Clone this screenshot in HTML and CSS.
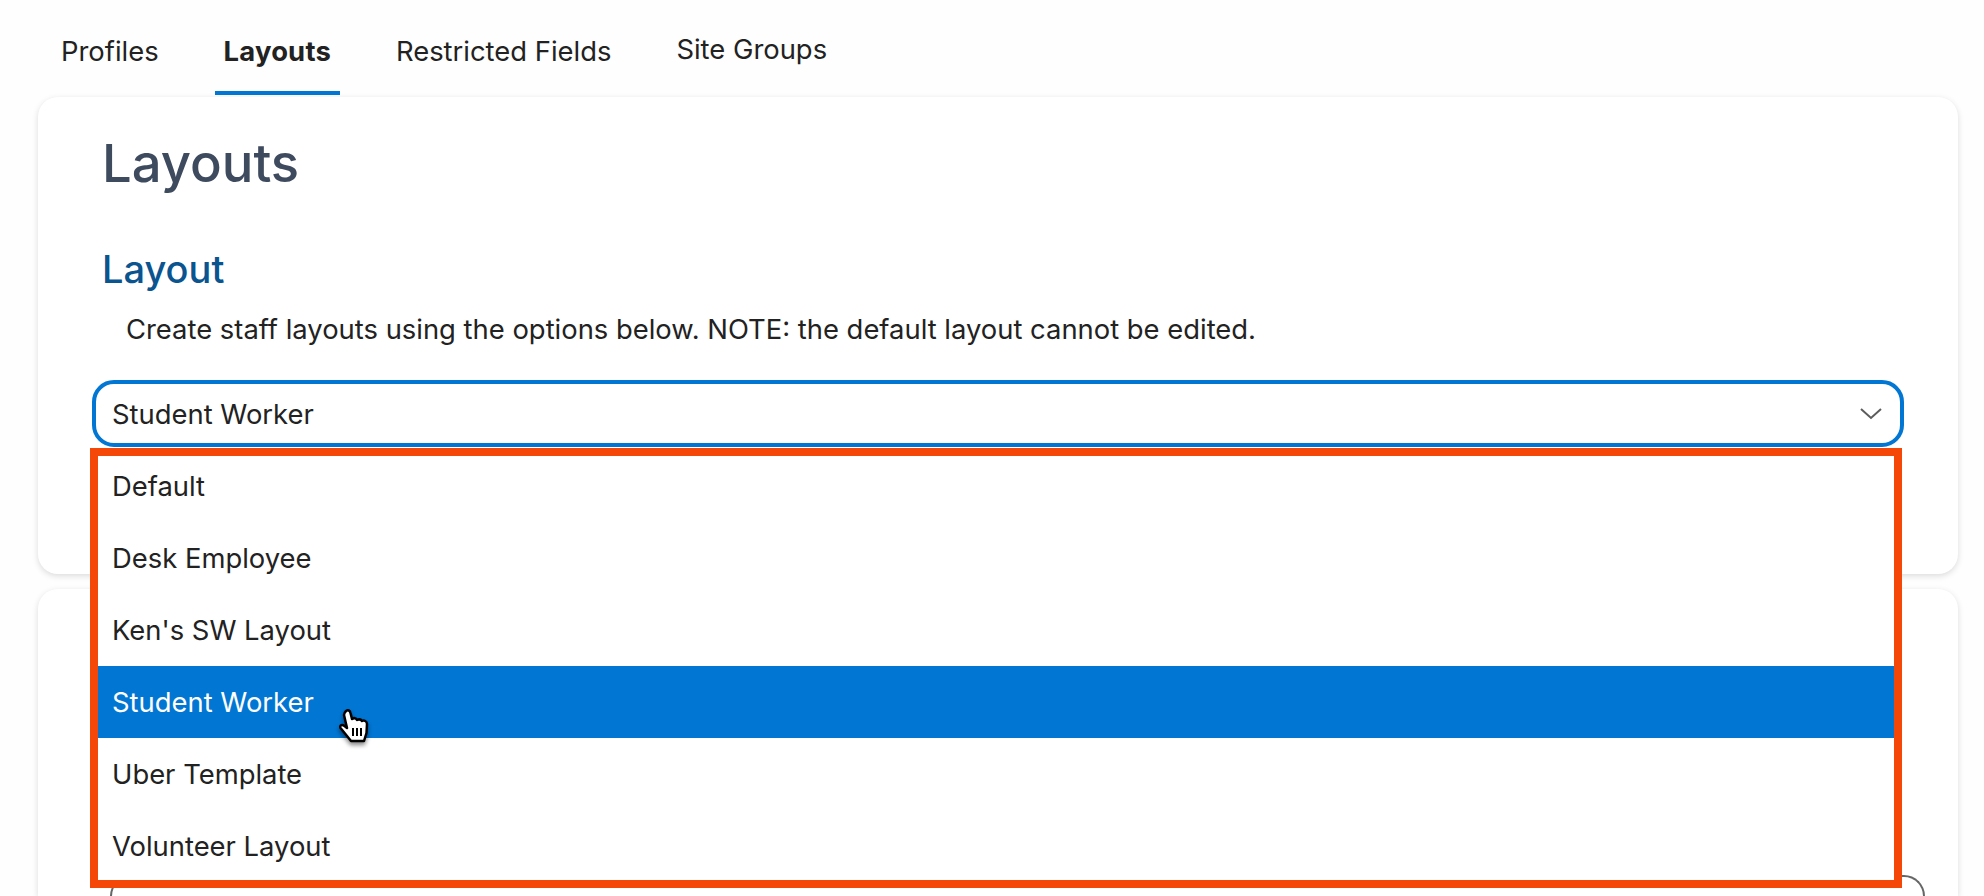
FILE: index.html
```html
<!DOCTYPE html>
<html lang="en">
<head>
    <meta charset="UTF-8">
    <title>Layouts</title>
    <link rel="stylesheet" href="styles.css">
</head>
<body>

<nav class="tabs">
    <a class="tab">Profiles</a>
    <a class="tab tab-active">Layouts</a>
    <a class="tab">Restricted Fields</a>
    <a class="tab tab-raised">Site Groups</a>
</nav>

<section class="card card-layouts">
    <h1>Layouts</h1>
    <h2>Layout</h2>
    <p class="hint">Create staff layouts using the options below. NOTE: the default layout cannot be edited.</p>

    <div class="select-wrap">
        <div class="select">
            <span>Student Worker</span>
            <svg class="chevron" width="24" height="13" viewBox="0 0 24 13">
                <path d="M2 2 L12 11 L22 2" fill="none" stroke="#5c5c5c" stroke-width="2"/>
            </svg>
        </div>

        <ul class="options">
            <li>Default</li>
            <li>Desk Employee</li>
            <li>Ken's SW Layout</li>
            <li class="selected">Student Worker</li>
            <li>Uber Template</li>
            <li>Volunteer Layout</li>
        </ul>

        <!-- hand pointer over the selected row -->
        <svg class="pointer" width="32" height="40" viewBox="0 0 32 40">
            <path class="pointer-hand" d="M7 2 C9 0.500 11 1.500 11.500 4 L13 10 C15 8.500 17 9 18 11 C20 10 22 10.500 23 12 C25 11 28 12 28 15 L27.500 24 L25 32 L12 32 L8 27 L1.500 19 C0.500 16 3 15 5.500 17 L8 19 L5 6 C5 4 6 3 7 2 Z"/>
            <path class="pointer-lines" d="M14 19 V27 M18 19 V27 M22 19 V27"/>
        </svg>
    </div>
</section>

<section class="card card-fields">
    <div class="field"></div>
</section>

</body>
</html>
```

FILE: styles.css
```css
body {
    margin: 0;
    background-color: #fefefe;
    color: #222;
    font-family: 'Inter', 'Liberation Sans', sans-serif;
    font-size: 27.4px;
}

.tabs {
    display: flex;
    gap: 47px;
    height: 95px;
    padding-left: 52px;
    box-sizing: border-box;
}

.tab {
    padding: 32px 9px 0;
    line-height: 38px;
    border-bottom: 4px solid transparent;
}

.tab-active {
    font-weight: 700;
    letter-spacing: 0.2px;
    border-bottom-color: #0176d3;
}

.tab-raised {
    padding-top: 30px;
}

.card {
    margin: 2px 26px 0 38px;
    background-color: #fff;
    border-radius: 20px;
    box-shadow: 0 2px 6px rgba(0, 0, 0, 0.14);
}

.card-layouts {
    height: 477px;
    box-sizing: border-box;
    padding: 34px 54px 0;
}

/* runs off the bottom of the window, so only the top corners show */
.card-fields {
    margin-top: 15px;
    height: 307px;
    padding: 286px 33px 0 72px;
    box-sizing: border-box;
    border-radius: 20px 20px 0 0;
}

h1 {
    margin: 0;
    padding-left: 10px;
    color: #3e4a5e;
    font-size: 52.6px;
    font-weight: 500;
    line-height: 64px;
}

h2 {
    margin: 52px 0 0;
    padding-left: 10px;
    color: #0a5490;
    font-size: 38px;
    font-weight: 500;
    line-height: 44px;
}

.hint {
    margin: 20px 0 0;
    padding-left: 34px;
    line-height: 36px;
}

.select-wrap {
    position: relative;
    margin-top: 33px;
}

.select {
    display: flex;
    align-items: center;
    justify-content: space-between;
    height: 67px;
    box-sizing: border-box;
    padding: 0 17px 0 16px;
    border: 4px solid #0176d3;
    border-radius: 22px;
    background-color: #fff;
}

.options {
    position: absolute;
    top: 70px;
    left: -2px;
    right: 2px;
    margin: 0;
    padding: 0;
    list-style: none;
    background-color: #fff;
}

/* red annotation frame drawn over the list */
.options::after {
    content: "";
    position: absolute;
    top: -2px;
    left: 0;
    right: 0;
    bottom: -6px;
    border: 8px solid #f44708;
}

.options li {
    height: 72px;
    line-height: 72px;
    padding-left: 22px;
}

.options .selected {
    background-color: #0176d3;
    color: #fff;
}

.pointer {
    position: absolute;
    top: 329px;
    left: 247px;
    filter: drop-shadow(0 3px 2px rgba(0, 0, 0, 0.45));
}

.pointer-hand {
    fill: #fff;
    stroke: #000;
    stroke-width: 2.5;
    stroke-linejoin: round;
}

.pointer-lines {
    fill: none;
    stroke: #000;
    stroke-width: 2;
}

.field {
    height: 21px;
    box-sizing: border-box;
    border: 2px solid #666;
    border-bottom: none;
    border-radius: 22px 22px 0 0;
}
```
